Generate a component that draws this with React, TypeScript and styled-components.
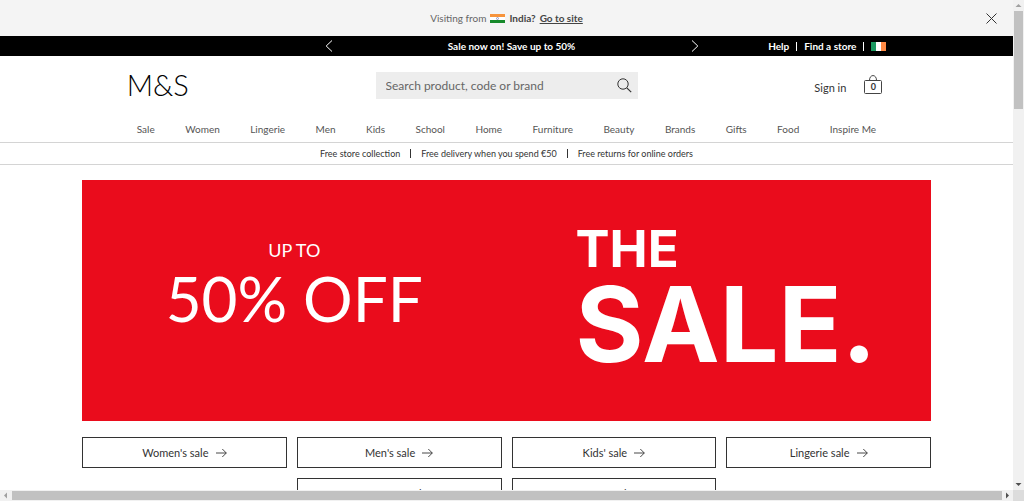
import React from "react";
import styled, { createGlobalStyle } from "styled-components";

const GlobalStyle = createGlobalStyle`
  *, *::before, *::after { box-sizing: border-box; }
  body {
    margin: 0;
    background: #fff;
    color: #333;
    font-family: Lato, "Open Sans", sans-serif;
    font-size: 11px;
  }
  a { color: inherit; text-decoration: none; }
  button { font: inherit; color: inherit; background: none; border: 0; padding: 0; cursor: pointer; }
  ul { list-style: none; margin: 0; padding: 0; }
  h1, h2, p { margin: 0; font-weight: 400; }
  svg { display: block; flex: none; }
`;

const Frame = styled.div`
  display: grid;
  grid-template-columns: minmax(0, 1fr) 11px;
  grid-template-rows: minmax(0, 1fr) 11px;
  height: 100vh;
`;

const Viewport = styled.div`
  overflow: hidden;
`;

const Scrollbar = styled.div<{ $vertical?: boolean }>`
  display: flex;
  flex-direction: ${(p) => (p.$vertical ? "column" : "row")};
  align-items: stretch;
  justify-content: space-between;
  background: #f1f1f1;
`;

const ScrollArrow = styled.div`
  display: flex;
  align-items: center;
  justify-content: center;
  min-width: 11px;
  min-height: 11px;
`;

const Thumb = styled.div<{ $share: string }>`
  flex: 0 0 ${(p) => p.$share};
  margin: 0 1px;
  background: #c1c1c1;
`;

const WideThumb = styled(Thumb)`
  margin: 1px 0;
`;

const Spring = styled.div`
  flex: 1;
`;

const Corner = styled.div`
  background: #dcdcdc;
`;

const LocaleBar = styled.aside`
  display: grid;
  grid-template-columns: 1fr auto 1fr;
  align-items: center;
  height: 36px;
  padding: 0 16px;
  background: #f4f4f4;
  color: #666;
  font-size: 10px;
`;

const LocaleText = styled.p`
  grid-column: 2;
  display: flex;
  align-items: center;
  gap: 4px;
`;

const LocaleCountry = styled.span`
  color: #444;
  font-weight: 700;
`;

const LocaleLink = styled.a`
  color: #444;
  font-weight: 700;
  text-decoration: underline;
`;

const CloseButton = styled.button`
  justify-self: end;
`;

const PromoBar = styled.div`
  background: #000;
  color: #fff;
  font-size: 10px;
  font-weight: 700;
`;

const Wide = styled.div`
  width: 75%;
  margin: 0 auto;
`;

const PromoInner = styled(Wide)`
  display: grid;
  grid-template-columns: 1fr 374px 1fr;
  align-items: center;
  height: 20px;
`;

const Promo = styled.div`
  grid-column: 2;
  display: flex;
  align-items: center;
  justify-content: space-between;
  margin: 0 -5px 0 5px;
`;

const PromoLinks = styled.nav`
  display: flex;
  align-items: center;
  justify-content: flex-end;
  gap: 7px;
`;

const Divider = styled.span`
  width: 1px;
  height: 9px;
  background: currentColor;
`;

const Masthead = styled(Wide)`
  display: grid;
  grid-template-columns: 1fr 262px 1fr;
  align-items: center;
  height: 58px;
`;

const Logo = styled.a`
  color: #000;
  font-size: 29px;
  line-height: 34px;
  font-weight: 300;
`;

const SearchForm = styled.form`
  display: flex;
  align-items: center;
  height: 27px;
  padding: 0 6px 0 10px;
  background: #ededed;
`;

const SearchInput = styled.input`
  flex: 1;
  min-width: 0;
  border: 0;
  padding: 0;
  outline: 0;
  background: transparent;
  font: inherit;
  font-size: 12px;
  color: #333;
  &::placeholder { color: #666; opacity: 1; }
`;

const Account = styled.div`
  display: flex;
  align-items: flex-end;
  justify-content: flex-end;
  gap: 18px;
  padding-right: 4px;
  line-height: 14px;
`;

const BagLink = styled.a`
  position: relative;
`;

const BagCount = styled.span`
  position: absolute;
  inset: 6px 0 0;
  text-align: center;
  font-size: 9px;
  line-height: 12px;
  font-weight: 700;
`;

const MainNav = styled.nav`
  border-bottom: 1px solid #d4d4d4;
`;

const NavList = styled.ul`
  display: flex;
  justify-content: space-between;
  align-items: center;
  width: 73%;
  height: 28px;
  margin: 0 auto;
  padding-top: 2px;
  color: #555;
  font-size: 10px;
`;

const Benefits = styled.ul`
  display: flex;
  justify-content: center;
  align-items: center;
  height: 22px;
  border-bottom: 1px solid #d4d4d4;
  font-size: 9px;
`;

const Benefit = styled.li`
  display: flex;
  align-items: center;
`;

const BenefitDivider = styled(Divider)`
  margin: 0 10px;
`;

const Main = styled.main`
  margin: 15px 82px 0;
`;

const Hero = styled.section`
  display: grid;
  grid-template-columns: 1fr 1fr;
  height: 241px;
  background: #ea0c1c;
  color: #fff;
`;

const Offer = styled.div`
  padding-top: 58px;
  text-align: center;
`;

const OfferLead = styled.p`
  font-size: 18px;
  line-height: 24px;
`;

const OfferValue = styled.h1`
  font-size: 62px;
  line-height: 72px;
`;

const SaleTitle = styled.h2`
  padding: 38px 0 0 69px;
  font-family: Inter, sans-serif;
  font-optical-sizing: none;
  font-weight: 700;
`;

const SaleLine = styled.span<{ $large?: boolean }>`
  display: block;
  font-size: ${(p) => (p.$large ? 104 : 51)}px;
  line-height: ${(p) => (p.$large ? 88 : 62)}px;
`;

const SaleGrid = styled.nav`
  display: flex;
  flex-wrap: wrap;
  justify-content: center;
  gap: 10px;
  margin-top: 16px;
`;

const SaleLink = styled.a`
  display: flex;
  align-items: center;
  justify-content: center;
  gap: 7px;
  width: calc((100% - 30px) / 4);
  height: 31px;
  border: 1px solid #333;
  font-size: 11px;
`;

const Arrow = () => (
  <svg width="11" height="10" viewBox="0 0 11 10" fill="none" stroke="#333" strokeWidth="0.9">
    <path d="M0 5H10.3M6.3 1l4 4-4 4" />
  </svg>
);

const Chevron = ({ flip }: { flip?: boolean }) => (
  <svg width="8" height="12" viewBox="0 0 8 12" fill="none" stroke="#fff">
    <path d={flip ? "M1 0.5L6.8 6 1 11.5" : "M7 0.5L1.2 6 7 11.5"} />
  </svg>
);

const IndiaFlag = () => (
  <svg width="15" height="9" viewBox="0 0 15 9">
    <path fill="#fff" d="M0 0h15v9H0z" />
    <path fill="#f7943c" d="M0 0h15v3H0z" />
    <path fill="#178a2b" d="M0 6h15v3H0z" />
    <circle cx="7.5" cy="4.5" r="1" fill="none" stroke="#5a6ab0" strokeWidth="0.6" />
  </svg>
);

const IrelandFlag = () => (
  <svg width="15" height="9" viewBox="0 0 15 9">
    <path fill="#fff" d="M0 0h15v9H0z" />
    <path fill="#1c9a62" d="M0 0h5v9H0z" />
    <path fill="#ff8a45" d="M10 0h5v9h-5z" />
  </svg>
);

const departments = [
  "Sale", "Women", "Lingerie", "Men", "Kids", "School", "Home",
  "Furniture", "Beauty", "Brands", "Gifts", "Food", "Inspire Me",
];
const benefits = ["Free store collection", "Free delivery when you spend €50", "Free returns for online orders"];
const sales = ["Women's sale", "Men's sale", "Kids' sale", "Lingerie sale", "Homeware sale", "Beauty sale"];

const Triangle = ({ d, fill = "#505050" }: { d: string; fill?: string }) => (
  <svg width="7" height="7" viewBox="0 0 7 7">
    <path d={d} fill={fill} />
  </svg>
);

export default function App() {
  return (
    <Frame>
      <GlobalStyle />
      <Viewport>
        <LocaleBar>
          <LocaleText>
            Visiting from <IndiaFlag />
            <LocaleCountry>India?</LocaleCountry>
            <LocaleLink href="#site">Go to site</LocaleLink>
          </LocaleText>
          <CloseButton type="button" aria-label="Close">
            <svg width="11" height="11" viewBox="0 0 11 11" fill="none" stroke="#333">
              <path d="M0.5 0.5l10 10M10.5 0.5l-10 10" />
            </svg>
          </CloseButton>
        </LocaleBar>

        <PromoBar>
          <PromoInner>
            <Promo>
              <button type="button" aria-label="Previous"><Chevron /></button>
              <span>Sale now on! Save up to 50%</span>
              <button type="button" aria-label="Next"><Chevron flip /></button>
            </Promo>
            <PromoLinks>
              <a href="#help">Help</a>
              <Divider />
              <a href="#stores">Find a store</a>
              <Divider />
              <a href="#country" aria-label="Ireland"><IrelandFlag /></a>
            </PromoLinks>
          </PromoInner>
        </PromoBar>

        <header>
          <Masthead>
            <Logo href="#home">M&amp;S</Logo>
            <SearchForm role="search">
              <SearchInput type="search" aria-label="Search" placeholder="Search product, code or brand" />
              <button type="submit" aria-label="Submit search">
                <svg width="15" height="15" viewBox="0 0 15 15" fill="none" stroke="#333">
                  <circle cx="6" cy="6" r="5.2" />
                  <path d="M9.8 9.8L14.2 14.2" strokeWidth="1.2" />
                </svg>
              </button>
            </SearchForm>
            <Account>
              <a href="#signin">Sign in</a>
              <BagLink href="#bag" aria-label="Bag">
                <svg width="18" height="20" viewBox="0 0 18 20" fill="none" stroke="#444">
                  <rect x="0.5" y="5.5" width="17" height="13" rx="1" />
                  <path d="M5.5 5.3C5.5 -1 12.5 -1 12.5 5.3" />
                </svg>
                <BagCount>0</BagCount>
              </BagLink>
            </Account>
          </Masthead>
          <MainNav>
            <NavList>
              {departments.map((d) => (
                <li key={d}><a href="#department">{d}</a></li>
              ))}
            </NavList>
          </MainNav>
          <Benefits>
            {benefits.map((b, i) => (
              <Benefit key={b}>
                {i > 0 && <BenefitDivider />}
                {b}
              </Benefit>
            ))}
          </Benefits>
        </header>

        <Main>
          <Hero>
            <Offer>
              <OfferLead>UP TO</OfferLead>
              <OfferValue>50% OFF</OfferValue>
            </Offer>
            <SaleTitle>
              <SaleLine>THE</SaleLine>
              <SaleLine $large>SALE.</SaleLine>
            </SaleTitle>
          </Hero>
          <SaleGrid>
            {sales.map((s) => (
              <SaleLink key={s} href="#sale">{s}<Arrow /></SaleLink>
            ))}
          </SaleGrid>
        </Main>
      </Viewport>

      <Scrollbar $vertical>
        <ScrollArrow><Triangle d="M0.5 5L3.5 2l3 3z" fill="#a0a0a0" /></ScrollArrow>
        <Thumb $share="20%" />
        <Spring />
        <ScrollArrow><Triangle d="M0.5 2L3.5 5l3-3z" /></ScrollArrow>
      </Scrollbar>
      <Scrollbar>
        <ScrollArrow><Triangle d="M5 0.5L2 3.5l3 3z" fill="#a0a0a0" /></ScrollArrow>
        <WideThumb $share="calc(100% - 23px)" />
        <ScrollArrow><Triangle d="M2 0.5L5 3.5l-3 3z" /></ScrollArrow>
      </Scrollbar>
      <Corner />
    </Frame>
  );
}
